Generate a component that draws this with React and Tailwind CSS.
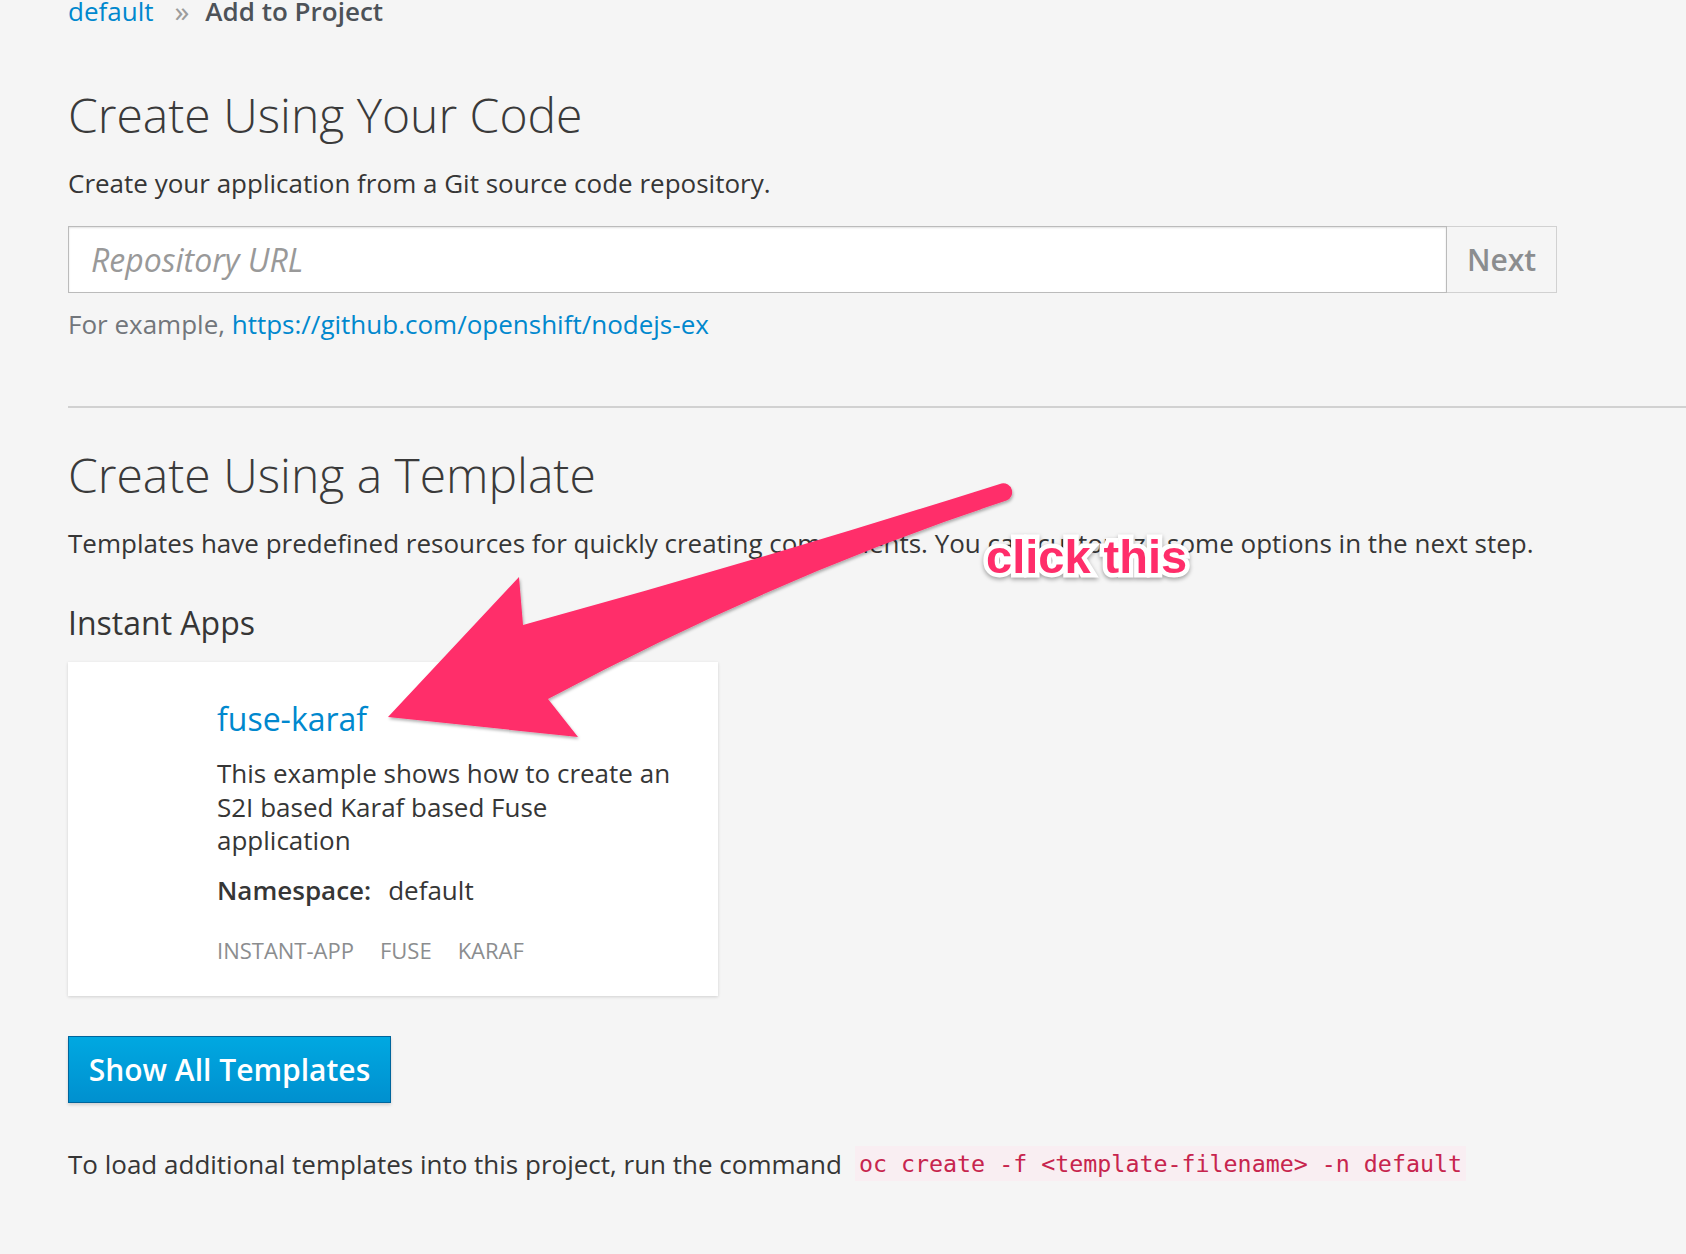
import React from "react";

const sans = "font-['Open_Sans',sans-serif]";

// Annotation overlay: pink arrow + "click this" label
function Annotation() {
  return (
    <>
      <svg className="absolute left-0 top-0 pointer-events-none" width="1686" height="1254" viewBox="0 0 1686 1254">
        <defs>
          <filter id="arrowShadow" x="-10%" y="-10%" width="120%" height="130%">
            <feDropShadow dx="1" dy="2" stdDeviation="1.5" floodColor="#000" floodOpacity="0.3" />
          </filter>
        </defs>
        <path
          d="M 1001.5 483.4 Q 760 560 523 625 L 519 577 L 388 717 L 578 737 L 548 699 Q 778 576 1006.5 500.6 A 9 9 0 0 0 1001.5 483.4 Z"
          fill="#ff2d6a"
          filter="url(#arrowShadow)"
        />
      </svg>
      <div className="absolute left-[986px] top-[533px] font-['Liberation_Sans',Arial,sans-serif] font-bold text-[47px] leading-none text-[#ff2d6a] [paint-order:stroke_fill] [-webkit-text-stroke:9px_white] drop-shadow-[0_2px_2px_rgba(0,0,0,0.35)] whitespace-nowrap">
        click this
      </div>
    </>
  );
}

export default function App() {
  return (
    <div className={`relative w-[1686px] h-[1254px] overflow-hidden bg-[#f5f5f5] text-[#363636] ${sans}`}>
      <div className="pl-[68px]">
        {/* breadcrumb */}
        <div className="-mt-[6px] flex items-center text-[26px] leading-[34px]">
          <span className="text-[#0088ce]">default</span>
          <span className="ml-[21px] mr-[16px] text-[#9c9c9c] text-[30px] leading-[34px]">»</span>
          <span className="font-semibold text-[#4d5258]">Add to Project</span>
        </div>

        {/* create from code */}
        <h1 className="mt-[57px] text-[48px] leading-[60px] font-light text-[#3a3a3a]">Create Using Your Code</h1>
        <p className="mt-[21px] text-[26px] leading-[34px]">Create your application from a Git source code repository.</p>

        <div className="mt-[26px] flex w-[1489px] h-[67px]">
          <div className="flex-1 flex items-center bg-white border border-[#bbbbbb] shadow-[inset_0_1px_2px_rgba(0,0,0,0.12)] px-[22px]">
            <span className="italic text-[32px] text-[#999999]">Repository URL</span>
          </div>
          <div className="w-[110px] flex items-center justify-center bg-[#f5f5f5] border border-l-0 border-[#d1d1d1] text-[30px] font-semibold text-[#8b8d8f]">
            Next
          </div>
        </div>

        <p className="mt-[14px] text-[26px] leading-[34px] text-[#72767b]">
          For example, <span className="text-[#0088ce]">https://github.com/openshift/nodejs-ex</span>
        </p>

        <div className="mt-[65px] h-[2px] bg-[#d1d1d1]" />

        {/* create from template */}
        <h2 className="mt-[37px] text-[48px] leading-[60px] font-light text-[#3a3a3a]">Create Using a Template</h2>
        <p className="mt-[21px] text-[26px] leading-[34px]">
          Templates have predefined resources for quickly creating components. You can customize some options in the next step.
        </p>

        <h3 className="mt-[43px] text-[32px] leading-[40px] font-normal">Instant Apps</h3>

        <div className="mt-[19px] w-[650px] h-[334px] bg-white shadow-[0_1px_3px_rgba(0,0,0,0.15)] pl-[149px] pt-[37px] pr-[40px]">
          <div className="text-[32px] leading-[40px] text-[#0088ce]">fuse-karaf</div>
          <p className="mt-[18px] text-[26px] leading-[33.5px]">
            This example shows how to create an S2I based Karaf based Fuse application
          </p>
          <div className="mt-[15px] flex gap-[17px] text-[26px] leading-[34px]">
            <span className="font-semibold">Namespace:</span>
            <span>default</span>
          </div>
          <div className="mt-[28px] flex gap-[26px] text-[22px] leading-[30px] text-[#8b8d8f]">
            <span>INSTANT-APP</span>
            <span>FUSE</span>
            <span>KARAF</span>
          </div>
        </div>

        <button className="mt-[40px] h-[67px] w-[323px] flex items-center justify-center bg-gradient-to-b from-[#00a8e1] to-[#0090cf] border border-[#00659c] text-white text-[30px] font-semibold shadow-[0_2px_3px_rgba(0,0,0,0.15)]">
          Show All Templates
        </button>

        <p className="mt-[43px] text-[26px] leading-[34px] flex items-center">
          <span>To load additional templates into this project, run the command</span>
          <code className="ml-[13px] px-[4px] bg-[#f9eef2] text-[#c7254e] font-['DejaVu_Sans_Mono',monospace] text-[23.3px] leading-[35px]">
            oc create -f &lt;template-filename&gt; -n default
          </code>
        </p>
      </div>

      <Annotation />
    </div>
  );
}
